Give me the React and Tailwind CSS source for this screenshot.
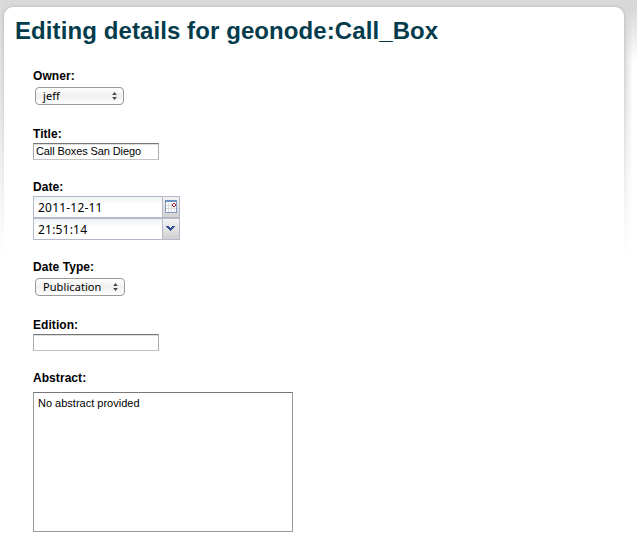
function Label({ children, className = "" }) {
  return (
    <div
      className={`h-4 text-[12px] leading-4 font-bold tracking-[0.06px] whitespace-nowrap ${className}`}
    >
      {children}
    </div>
  );
}

function Select({ children, className }) {
  return (
    <div
      className={`ml-[2px] flex h-[18px] items-center justify-between rounded-[4px] border border-[#9b9b9b] bg-linear-to-b from-white via-[#f0f0f0] to-white pr-[6px] pl-[7px] font-['Noto_Sans',sans-serif] text-[11px] leading-4 tracking-[0.08px] ${className}`}
    >
      <span>{children}</span>
      <svg width="5" height="8" viewBox="0 0 5 8" fill="#444">
        <path d="M2.5 0 4.8 3H.2zM2.5 8 .2 5h4.6z" />
      </svg>
    </div>
  );
}

function Field({ children, className = "" }) {
  return (
    <div
      className={`h-[17px] w-[126px] border border-t-[#777] border-r-[#aaa] border-b-[#c4c4c4] border-l-[#aaa] bg-white pl-[2px] text-[11px] leading-[15px] tracking-[-0.1px] whitespace-nowrap shadow-[inset_0_1px_0_#dedede] ${className}`}
    >
      {children}
    </div>
  );
}

function Combo({ children, icon }) {
  return (
    <div className="flex h-[22px] w-[147px] border border-[#b5b8c8] bg-linear-to-b from-[#edf3f3] to-white to-40%">
      <span className="flex-1 pl-1 font-['Noto_Sans',sans-serif] text-[12px] leading-[22px] tracking-[0.2px]">
        {children}
      </span>
      <span className="flex w-[17px] border-l border-[#b5b8c8] bg-linear-to-b from-[#f4f4f4] to-[#d0d0d0] pt-[3px] pl-[2px]">
        {icon}
      </span>
    </div>
  );
}

function CalendarIcon() {
  return (
    <svg width="12" height="13" viewBox="0 0 12 13" shapeRendering="crispEdges">
      <path fill="#fff" d="M0 0h12v13H0z" />
      <path fill="#dadada" d="M3 3h1v9H3zM6 3h1v9H6zM9 3h1v9H9zM1 5h10v1H1zM1 8h10v1H1z" />
      <path fill="#819cc4" d="M0 0h1v13H0zM11 0h1v13h-1zM0 12h12v1H0z" />
      <path fill="#6d8fc0" d="M0 0h12v2H0z" />
      <path fill="#fff" d="M7 3h4v4H7z" />
      <path fill="#9c1c2c" d="M8 3h2v1H8zM8 6h2v1H8zM7 4h1v2H7zM10 4h1v2h-1z" />
    </svg>
  );
}

function ChevronIcon() {
  return (
    <svg
      width="9"
      height="5"
      viewBox="0 0 9 5"
      className="mt-[4px] ml-[1px]"
      shapeRendering="crispEdges"
    >
      <path
        fill="#2e4f8d"
        d="M0 0h3v1H0zM6 0h3v1H6zM1 1h3v1H1zM5 1h3v1H5zM2 2h5v1H2zM3 3h3v1H3zM4 4h1v1H4z"
      />
    </svg>
  );
}

export default function App() {
  return (
    <div className="relative h-[553px] w-[637px] overflow-hidden bg-white bg-[linear-gradient(#d8d8d8,#d9d9d9_10px,#e8e8e8_30px,#fff_62px)] font-['Liberation_Sans',Arial,sans-serif] text-black">
      {/* Soft halo around the panel, fading out down the page */}
      <div className="absolute inset-0 [mask-image:linear-gradient(#000,#000_25px,rgba(0,0,0,0.7)_110px,rgba(0,0,0,0.3)_190px,transparent_255px)]">
        <div className="h-full w-[632px] bg-[linear-gradient(90deg,#dcdcdc,#d8d8d8_4px,#d8d8d8_622px,rgba(216,216,216,0.85)_626px,rgba(216,216,216,0.1)_632px)] pt-[7px] pl-1">
          <div className="h-[600px] w-[620px] rounded-[9px] shadow-[0_0_3px_rgba(0,0,0,0.2)]" />
        </div>
      </div>

      <div className="relative pt-[7px] pl-1">
        <main className="h-[546px] w-[620px] rounded-t-[9px] bg-white pl-[29px]">
          <h1 className="-ml-[18px] h-[61px] pt-[8px] text-[24px] leading-8 font-bold tracking-[0.09px] whitespace-nowrap text-[#043c4c]">
            Editing details for geonode:Call_Box
          </h1>

          <Label>Owner:</Label>
          <Select className="mt-[3px] w-[89px]">jeff</Select>

          <div className="mt-[21px]">
            <Label>Title:</Label>
            <Field className="mt-[1px]">Call Boxes San Diego</Field>
          </div>

          <div className="mt-[19px]">
            <Label>Date:</Label>
            <div className="mt-[1px]">
              <Combo icon={<CalendarIcon />}>2011-12-11</Combo>
              <Combo icon={<ChevronIcon />}>21:51:14</Combo>
            </div>
          </div>

          <div className="mt-[19px]">
            <Label>Date Type:</Label>
            <Select className="mt-[3px] w-[90px]">Publication</Select>
          </div>

          <div className="mt-[21px]">
            <Label>Edition:</Label>
            <Field className="mt-[1px]" />
          </div>

          <div className="mt-[19px]">
            <Label>Abstract:</Label>
            <div className="mt-[6px] h-[140px] w-[260px] border border-[#999] border-t-[#777] pt-[3px] pl-[4px] text-[11px] leading-[14px]">
              No abstract provided
            </div>
          </div>
        </main>
      </div>
    </div>
  );
}
